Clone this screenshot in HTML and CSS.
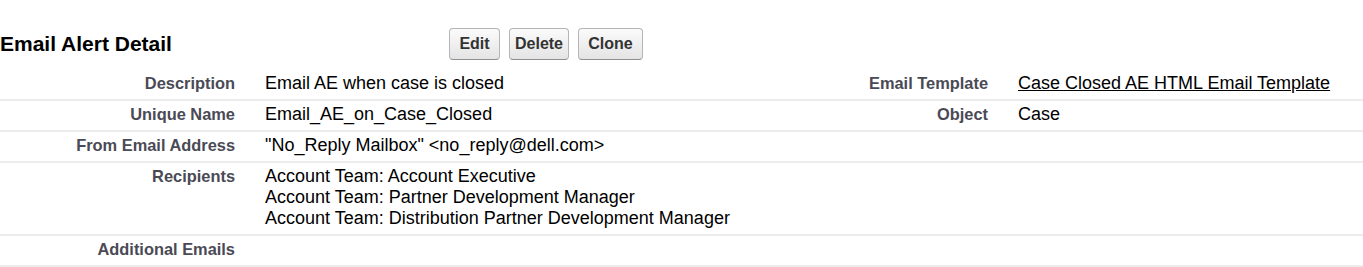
FILE: index.html
```html
<!DOCTYPE html>
<html lang="en">
<head>
  <meta charset="UTF-8" />
  <meta name="viewport" content="width=device-width, initial-scale=1.0"/>
  <title>Email Alert Detail</title>
  <link rel="stylesheet" href="styles.css">
</head>
<body>

  <div class="pb-header">
    <h2 class="pb-title">Email Alert Detail</h2>
    <div class="pb-buttons">
      <button type="button" class="btn btn-edit">Edit</button>
      <button type="button" class="btn btn-delete">Delete</button>
      <button type="button" class="btn btn-clone">Clone</button>
    </div>
  </div>

  <table class="detail-list">
    <colgroup>
      <col class="label-col-1">
      <col class="data-col-1">
      <col class="label-col-2">
      <col>
    </colgroup>
    <tbody>
      <tr>
        <td class="label">Description</td>
        <td class="data">Email AE when case is closed</td>
        <td class="label">Email Template</td>
        <td class="data"><a href="#">Case Closed AE HTML Email Template</a></td>
      </tr>
      <tr>
        <td class="label">Unique Name</td>
        <td class="data">Email_AE_on_Case_Closed</td>
        <td class="label">Object</td>
        <td class="data">Case</td>
      </tr>
      <tr>
        <td class="label">From Email Address</td>
        <td class="data">"No_Reply Mailbox" &lt;no_reply@dell.com&gt;</td>
        <td class="label"></td>
        <td class="data"></td>
      </tr>
      <tr>
        <td class="label">Recipients</td>
        <td class="data">
          Account Team: Account Executive<br>
          Account Team: Partner Development Manager<br>
          Account Team: Distribution Partner Development Manager
        </td>
        <td class="label"></td>
        <td class="data"></td>
      </tr>
      <tr>
        <td class="label">Additional Emails</td>
        <td class="data"></td>
        <td class="label"></td>
        <td class="data"></td>
      </tr>
    </tbody>
  </table>

</body>
</html>
```

FILE: styles.css
```css
body {
  margin: 0;
  font-family: "Liberation Sans", Arial, sans-serif;
  background-color: #fff;
  color: #000;
  overflow: hidden;
}

.pb-header {
  display: flex;
  align-items: center;
  padding-top: 28px;
  margin-bottom: 10px;
}

.pb-title {
  width: 449px;
  margin: 0;
  font-size: 21px;
  line-height: 24px;
  font-weight: bold;
  color: #000;
}

.pb-buttons {
  display: flex;
  gap: 9px;
}

.btn {
  height: 32px;
  padding: 0;
  font-family: "Liberation Sans", Arial, sans-serif;
  font-size: 16px;
  font-weight: bold;
  color: #333;
  background: linear-gradient(#fbfbfb, #e4e4e4);
  border: 1px solid #b5b5b5;
  border-bottom-color: #8f8f8f;
  border-radius: 4px;
  cursor: pointer;
}

.btn:hover {
  background: #e8e8e9;
}

.btn-edit {
  width: 51px;
}

.btn-delete {
  width: 60px;
}

.btn-clone {
  width: 65px;
}

.detail-list {
  width: 100%;
  border-collapse: collapse;
  table-layout: fixed;
}

.label-col-1 {
  width: 250px;
}

.data-col-1 {
  width: 482px;
}

.label-col-2 {
  width: 271px;
}

.detail-list td {
  border-bottom: 2px solid #ececec;
  padding: 3px 0 5px;
  line-height: 21px;
  vertical-align: baseline;
  white-space: nowrap;
}

.detail-list .label {
  padding-right: 15px;
  text-align: right;
  font-size: 16.4px;
  font-weight: bold;
  color: #4a4a56;
}

.detail-list .data {
  padding-left: 15px;
  font-size: 18px;
}

.data a {
  color: #000;
  text-decoration: underline;
}
```
